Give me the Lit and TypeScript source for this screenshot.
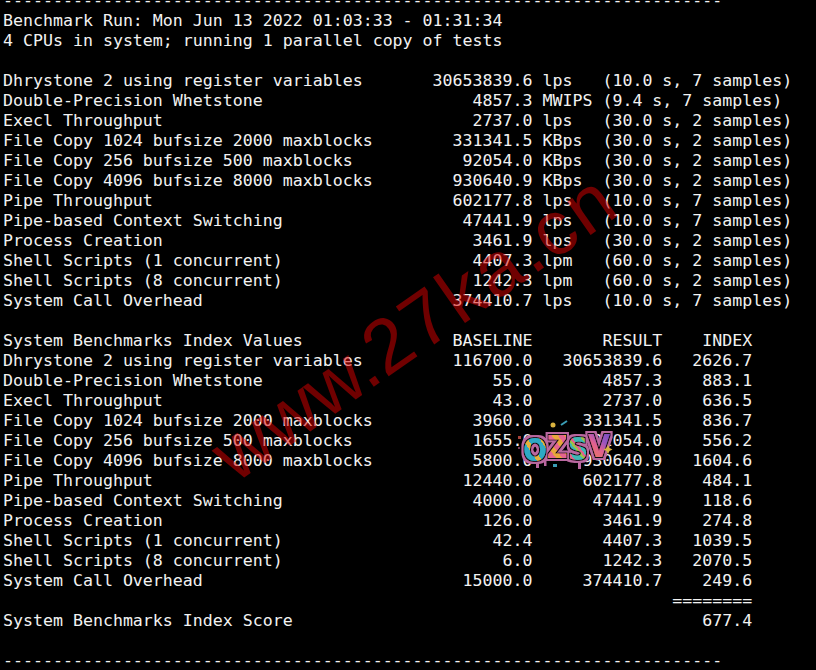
import { LitElement, html, css } from "lit";
import { customElement } from "lit/decorators.js";

const dash = "-".repeat(72);
const lines = [
  dash,
  "Benchmark Run: Mon Jun 13 2022 01:03:33 - 01:31:34",
  "4 CPUs in system; running 1 parallel copy of tests",
  "",
  "Dhrystone 2 using register variables       30653839.6 lps   (10.0 s, 7 samples)",
  "Double-Precision Whetstone                     4857.3 MWIPS (9.4 s, 7 samples)",
  "Execl Throughput                               2737.0 lps   (30.0 s, 2 samples)",
  "File Copy 1024 bufsize 2000 maxblocks        331341.5 KBps  (30.0 s, 2 samples)",
  "File Copy 256 bufsize 500 maxblocks           92054.0 KBps  (30.0 s, 2 samples)",
  "File Copy 4096 bufsize 8000 maxblocks        930640.9 KBps  (30.0 s, 2 samples)",
  "Pipe Throughput                              602177.8 lps   (10.0 s, 7 samples)",
  "Pipe-based Context Switching                  47441.9 lps   (10.0 s, 7 samples)",
  "Process Creation                               3461.9 lps   (30.0 s, 2 samples)",
  "Shell Scripts (1 concurrent)                   4407.3 lpm   (60.0 s, 2 samples)",
  "Shell Scripts (8 concurrent)                   1242.3 lpm   (60.0 s, 2 samples)",
  "System Call Overhead                         374410.7 lps   (10.0 s, 7 samples)",
  "",
  "System Benchmarks Index Values               BASELINE       RESULT    INDEX",
  "Dhrystone 2 using register variables         116700.0   30653839.6   2626.7",
  "Double-Precision Whetstone                       55.0       4857.3    883.1",
  "Execl Throughput                                 43.0       2737.0    636.5",
  "File Copy 1024 bufsize 2000 maxblocks          3960.0     331341.5    836.7",
  "File Copy 256 bufsize 500 maxblocks            1655.0      92054.0    556.2",
  "File Copy 4096 bufsize 8000 maxblocks          5800.0     930640.9   1604.6",
  "Pipe Throughput                               12440.0     602177.8    484.1",
  "Pipe-based Context Switching                   4000.0      47441.9    118.6",
  "Process Creation                                126.0       3461.9    274.8",
  "Shell Scripts (1 concurrent)                     42.4       4407.3   1039.5",
  "Shell Scripts (8 concurrent)                      6.0       1242.3   2070.5",
  "System Call Overhead                          15000.0     374410.7    249.6",
  "                                                                   ========",
  "System Benchmarks Index Score                                         677.4",
  "",
  dash,
];

@customElement("app-root")
export class AppRoot extends LitElement {
  static styles = css`
    :host {
      display: block;
      position: relative;
      width: 816px;
      height: 670px;
      overflow: hidden;
      background: #000;
    }
    .term {
      margin: -9px 0 0 0;
      padding-left: 3px;
      font-family: "DejaVu Sans Mono", monospace;
      font-size: 16.6px;
      line-height: 20px;
      color: #f2f2f2;
      white-space: pre;
    }
    .mark {
      position: absolute;
      left: 235px;
      top: 419px;
      font-family: "Liberation Sans", sans-serif;
      font-size: 77px;
      line-height: 77px;
      color: rgba(224, 0, 0, 0.5);
      white-space: pre;
      transform: rotate(-35deg);
      transform-origin: 0 65.2px;
    }
    .mark .tail {
      letter-spacing: 3px;
    }
    .logo {
      position: absolute;
      left: 515px;
      top: 420px;
    }
    .logo text {
      font-family: "DejaVu Sans", sans-serif;
      font-weight: 700;
      font-size: 32px;
    }
  `;

  render() {
    return html`
      <pre class="term">${lines.join("\n")}</pre>
      <div class="mark">www.<span class="tail">27ka.cn</span></div>
      <svg class="logo" width="105" height="55" viewBox="0 0 105 55">
        <defs>
          <filter id="outline" x="-15%" y="-30%" width="130%" height="160%">
            <feMorphology in="SourceAlpha" operator="dilate" radius="1.3" result="inner" />
            <feFlood flood-color="#0a0a0a" />
            <feComposite in2="inner" operator="in" result="black" />
            <feMorphology in="SourceAlpha" operator="dilate" radius="3" result="outer" />
            <feFlood flood-color="#b9679f" />
            <feComposite in2="outer" operator="in" result="pink" />
            <feMerge>
              <feMergeNode in="pink" />
              <feMergeNode in="black" />
              <feMergeNode in="SourceGraphic" />
            </feMerge>
          </filter>
          <linearGradient id="gO" gradientUnits="userSpaceOnUse" x1="0" y1="0" x2="12" y2="-8" spreadMethod="repeat">
            <stop offset="0" stop-color="#2ea9c4" /><stop offset="0.7" stop-color="#2ea9c4" />
            <stop offset="0.7" stop-color="#e2b23e" /><stop offset="1" stop-color="#e2b23e" />
          </linearGradient>
          <linearGradient id="gZ" gradientUnits="userSpaceOnUse" x1="0" y1="0" x2="8" y2="-6" spreadMethod="repeat">
            <stop offset="0" stop-color="#e8a63c" /><stop offset="0.5" stop-color="#e8a63c" />
            <stop offset="0.5" stop-color="#e4658f" /><stop offset="1" stop-color="#e4658f" />
          </linearGradient>
          <linearGradient id="gS" gradientUnits="userSpaceOnUse" x1="0" y1="0" x2="9" y2="-7" spreadMethod="repeat">
            <stop offset="0" stop-color="#3fb6b4" /><stop offset="0.6" stop-color="#3fb6b4" />
            <stop offset="0.6" stop-color="#9ac24a" /><stop offset="0.8" stop-color="#9ac24a" />
            <stop offset="0.8" stop-color="#e0648c" /><stop offset="1" stop-color="#e0648c" />
          </linearGradient>
          <linearGradient id="gV" gradientUnits="userSpaceOnUse" x1="72" y1="38" x2="95" y2="14">
            <stop offset="0" stop-color="#e8834a" /><stop offset="0.45" stop-color="#e2608f" />
            <stop offset="0.7" stop-color="#9a55c0" /><stop offset="1" stop-color="#7a4fc0" />
          </linearGradient>
        </defs>
        <path fill="#b9679f" d="M21 40h3v8h-3zM29 40h2.500v6h-2.500zM63 40h3v9h-3z" />
        <text x="8" y="41" textLength="87" lengthAdjust="spacingAndGlyphs" filter="url(#outline)"><tspan fill="url(#gO)">O</tspan><tspan dy="-3" fill="url(#gZ)">Z</tspan><tspan dy="2" fill="url(#gS)">S</tspan><tspan dy="-3" fill="url(#gV)">V</tspan></text>
        <circle cx="38" cy="5" r="2.500" fill="#d9b23e" />
        <path d="M46 5 L52 1" stroke="#3a9db5" stroke-width="2" />
        <rect x="38" y="44" width="4" height="3" fill="#3a9db5" />
        <rect x="3" y="16" width="3" height="3" fill="#a8423a" />
        <rect x="3" y="27" width="2" height="2" fill="#7a3a5a" />
        <path d="M93 25 l1.500 3 3 1.500 -3 1.500 -1.500 3 -1.500 -3 -3 -1.500 3 -1.500 z" fill="#d9b23e" />
      </svg>
    `;
  }
}
